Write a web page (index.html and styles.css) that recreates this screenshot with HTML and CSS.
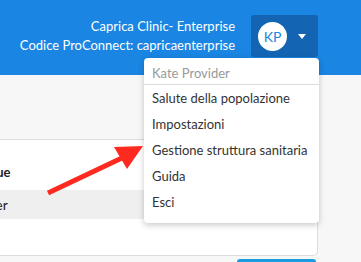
FILE: index.html
```html
<!DOCTYPE html>
<html lang="it">
<head>
    <meta charset="UTF-8">
    <meta name="viewport" content="width=device-width, initial-scale=1.0">
    <title>ProConnect</title>
    <link rel="stylesheet" href="styles.css">
</head>
<body>
    <header class="topbar">
        <div class="clinic-info">
            <div>Caprica Clinic- Enterprise</div>
            <div>Codice ProConnect: capricaenterprise</div>
        </div>
        <button class="user-button">
            <span class="avatar">KP</span>
            <span class="caret"></span>
        </button>
    </header>

    <main class="page">
        <div class="card">
            <div class="card-header"></div>
            <div class="card-body">
                <div class="field">
                    <label class="field-label">Lingue</label>
                    <div class="field-input">Provider</div>
                </div>
            </div>
        </div>
        <div class="actions">
            <button class="primary" aria-label="Salva"></button>
        </div>
    </main>

    <div class="dropdown">
        <div class="dropdown-header">Kate Provider</div>
        <ul class="dropdown-list">
            <li>Salute della popolazione</li>
            <li>Impostazioni</li>
            <li>Gestione struttura sanitaria</li>
            <li>Guida</li>
            <li>Esci</li>
        </ul>
    </div>

    <!-- annotation arrow -->
    <svg class="annotation" width="361" height="262" viewBox="0 0 361 262">
        <line x1="48" y1="193" x2="124" y2="157" stroke="#ff2a1f" stroke-width="5"/>
        <polygon points="114,147 143,146 127,169" fill="#ff2a1f"/>
    </svg>
</body>
</html>
```

FILE: styles.css
```css
:root {
    --header-blue: #1a85e2;
    --header-dark: #1464b4;
    --text-color: #333;
    --border-color: #dcdcdc;
    --page-bg: #f7f7f7;
}

body {
    font-family: Lato, "Open Sans", sans-serif;
    margin: 0;
    padding: 0;
    color: var(--text-color);
    background-color: var(--page-bg);
    overflow: hidden;
    height: 262px;
}

.topbar {
    height: 75px;
    background-color: var(--header-blue);
    display: flex;
    justify-content: flex-end;
    align-items: flex-start;
    padding: 15px 43px 0 0;
    box-sizing: border-box;
    gap: 16px;
}

.clinic-info {
    color: white;
    font-size: 13px;
    line-height: 19px;
    text-align: right;
    padding-top: 2px;
}

.user-button {
    display: flex;
    align-items: center;
    width: 67px;
    height: 42px;
    padding: 0 0 0 7px;
    border: none;
    border-radius: 3px;
    background-color: var(--header-dark);
    box-sizing: border-box;
}

.avatar {
    width: 29px;
    height: 29px;
    border-radius: 50%;
    background: white;
    color: var(--header-blue);
    font-family: Lato, sans-serif;
    font-size: 14px;
    line-height: 29px;
    text-align: center;
}

.caret {
    margin-left: 11px;
    width: 0;
    height: 0;
    border-left: 4.5px solid transparent;
    border-right: 4.5px solid transparent;
    border-top: 5px solid white;
}

.page {
    display: flex;
    flex-direction: column;
}

.card {
    margin-left: -48px;
    width: 366px;
    background: white;
    border-right: 1px solid var(--border-color);
    border-bottom: 1px solid var(--border-color);
    border-bottom-right-radius: 5px;
    box-sizing: border-box;
}

.card-header {
    height: 64px;
    background: var(--page-bg);
    border-bottom: 1px solid var(--border-color);
}

.card-body {
    padding: 24px 20px 36px;
}

.field-label {
    display: block;
    font-weight: bold;
    font-size: 13px;
    line-height: 16px;
    color: #222;
}

.field-input {
    margin: 10px 0 0 -24px;
    width: 193px;
    height: 29px;
    padding: 0 8px;
    background: #efefef;
    font-size: 14px;
    line-height: 29px;
    color: #222;
}

.actions {
    display: flex;
    justify-content: flex-end;
    padding: 3px 45px 0 0;
}

.primary {
    width: 79px;
    height: 30px;
    border: none;
    border-radius: 3px;
    background: #1b9be0;
}

.dropdown {
    position: absolute;
    top: 58px;
    left: 144px;
    width: 175px;
    background: white;
    border-radius: 4px;
    box-shadow: 0 2px 6px rgba(0, 0, 0, 0.22);
    padding-bottom: 8px;
    font-size: 13px;
}

.dropdown-header {
    color: #999;
    padding: 7px 8px 3px;
    line-height: 16px;
    border-bottom: 1px solid var(--border-color);
}

.dropdown-list {
    list-style: none;
    margin: 0;
    padding: 0;
}

.dropdown-list li {
    padding: 0 8px;
    line-height: 26px;
    color: var(--text-color);
}

.annotation {
    position: absolute;
    top: 0;
    left: 0;
    pointer-events: none;
}
```
